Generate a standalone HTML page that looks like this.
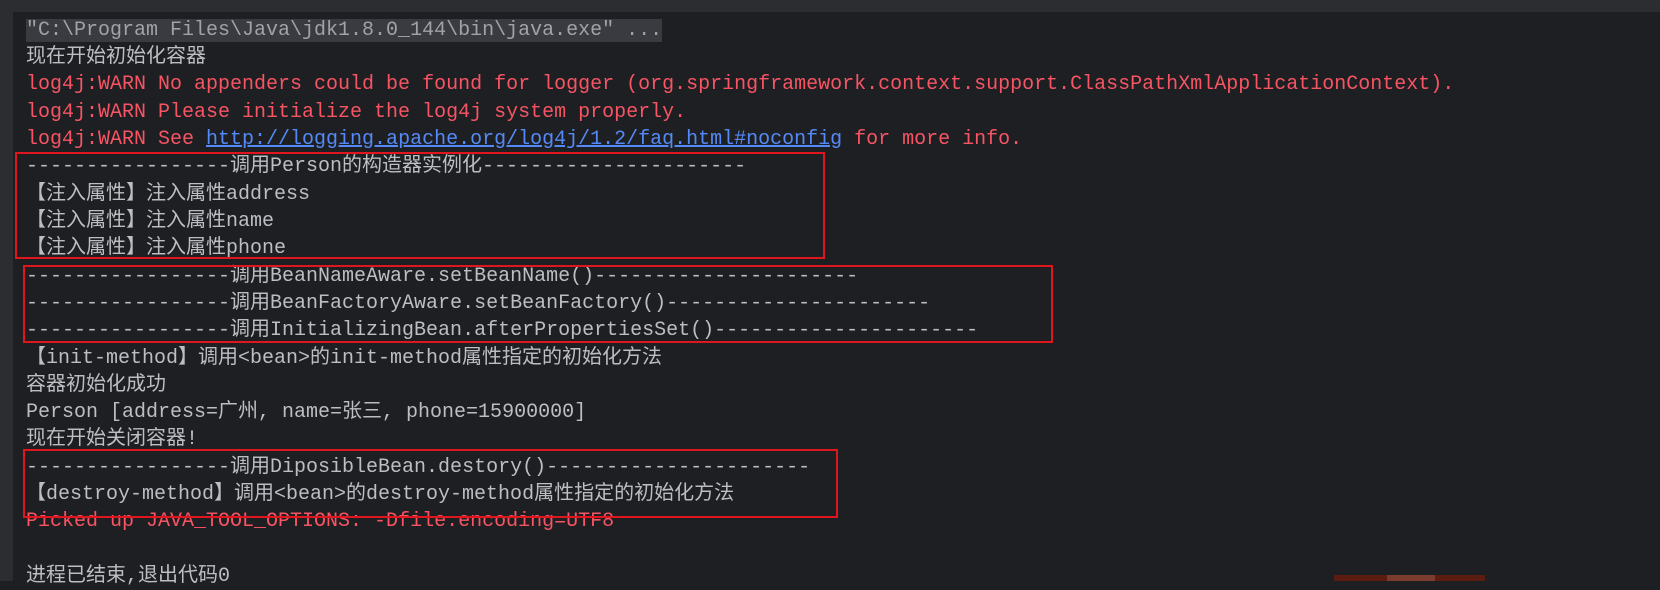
<!DOCTYPE html>
<html><head><meta charset="utf-8"><style>
html,body{margin:0;padding:0;}
body{width:1660px;height:581px;background:#1e1f22;position:relative;overflow:hidden;
font-family:"Liberation Mono","Noto Sans CJK SC",monospace;font-size:20px;color:#bcbec4;}
.top{position:absolute;left:0;top:0;width:1660px;height:12px;background:#2b2d30;}
.gut{position:absolute;left:0;top:12px;width:13px;height:569px;background:#2b2d30;}
.l{position:absolute;left:26px;height:27px;line-height:27px;white-space:pre;}
.r{color:#f75464;}
a{color:#548af7;text-decoration:underline;}
.hl{background:#393b40;color:#a0a2a8;}
.box{position:absolute;border:2px solid #e0161f;}
</style></head><body>
<div class="top"></div><div class="gut"></div>
<div class="l" style="top:17px"><span class="hl">"C:\Program Files\Java\jdk1.8.0_144\bin\java.exe" ...</span></div>
<div class="l" style="top:44px">现在开始初始化容器</div>
<div class="l r" style="top:71px">log4j:WARN No appenders could be found for logger (org.springframework.context.support.ClassPathXmlApplicationContext).</div>
<div class="l r" style="top:99px">log4j:WARN Please initialize the log4j system properly.</div>
<div class="l r" style="top:126px">log4j:WARN See <a>http://logging.apache.org/log4j/1.2/faq.html#noconfig</a> for more info.</div>
<div class="l" style="top:153px">-----------------调用Person的构造器实例化----------------------</div>
<div class="l" style="top:181px">【注入属性】注入属性address</div>
<div class="l" style="top:208px">【注入属性】注入属性name</div>
<div class="l" style="top:235px">【注入属性】注入属性phone</div>
<div class="l" style="top:263px">-----------------调用BeanNameAware.setBeanName()----------------------</div>
<div class="l" style="top:290px">-----------------调用BeanFactoryAware.setBeanFactory()----------------------</div>
<div class="l" style="top:317px">-----------------调用InitializingBean.afterPropertiesSet()----------------------</div>
<div class="l" style="top:345px">【init-method】调用&lt;bean&gt;的init-method属性指定的初始化方法</div>
<div class="l" style="top:372px">容器初始化成功</div>
<div class="l" style="top:399px">Person [address=广州, name=张三, phone=15900000]</div>
<div class="l" style="top:426px">现在开始关闭容器!</div>
<div class="l" style="top:454px">-----------------调用DiposibleBean.destory()----------------------</div>
<div class="l" style="top:481px">【destroy-method】调用&lt;bean&gt;的destroy-method属性指定的初始化方法</div>
<div class="l r" style="top:508px">Picked up JAVA_TOOL_OPTIONS: -Dfile.encoding=UTF8</div>
<div class="l" style="top:563px">进程已结束,退出代码0</div>
<div class="box" style="left:15px;top:152px;width:806px;height:103px"></div>
<div class="box" style="left:23px;top:265px;width:1026px;height:74px"></div>
<div class="box" style="left:23px;top:449px;width:811px;height:65px"></div>
<div style="position:absolute;left:1334px;top:575px;width:151px;height:6px;background:#5a1d10"></div>
<div style="position:absolute;left:1387px;top:575px;width:48px;height:6px;background:#7a3d2d"></div>
</body></html>
